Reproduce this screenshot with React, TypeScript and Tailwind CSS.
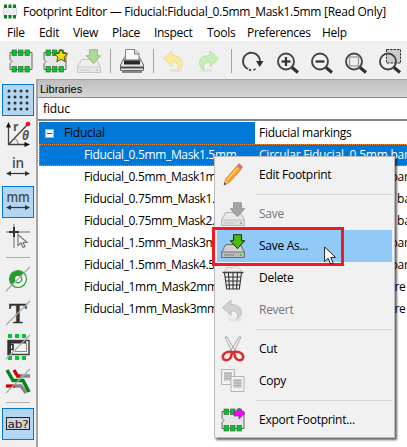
import React from "react";

type IconProps = { className?: string; children: React.ReactNode };
const Icon = ({ className = "", children }: IconProps) => (
  <svg width="24" height="24" viewBox="0 0 24 24" fill="none" className={`shrink-0 overflow-visible ${className}`}>
    {children}
  </svg>
);

const Chip = ({ children }: { children?: React.ReactNode }) => (
  <Icon>
    <path d="M1 3.500h22v17H1v-6l2-2-2-2z" fill="#e6e6e6" stroke="#666" />
    {[3, 9.500, 16].map((x) => (
      <g key={x} fill="#00c52b" stroke="#39713f" strokeWidth="0.700">
        <rect x={x} y="1" width="4.500" height="5.500" />
        <rect x={x} y="17.500" width="4.500" height="5.500" />
      </g>
    ))}
    {children}
  </Icon>
);
const Star = () => (
  <path d="M18 0l2 4.400 4.800.5-3.700 3.200 1.100 4.600L18 10.300l-4.200 2.400 1.100-4.600-3.700-3.200 4.800-.5z" fill="#f1dd16" stroke="#4d4300" strokeWidth="0.900" />
);
const Drive = ({ arrow, edge, body, led, tip = edge }: { arrow: string; edge: string; body: string; led: string; tip?: string }) => (
  <Icon>
    <path d="M4.500 10.500h15L23.500 18v5.500H.5V18z" fill={body} stroke={edge} strokeWidth="0.900" strokeLinejoin="round" />
    <path d="M5.500 11.500h13l3 6h-19z" fill="#fff" fillOpacity=".35" />
    <path d="M1 18h22M3 21h10" stroke={edge} strokeWidth="0.700" />
    <rect x="19" y="20" width="2" height="2" fill={led} />
    <path d="M12.500.7h8v6h3.200l-7.200 8-7.200-8h3.200z" fill={arrow} stroke={tip} strokeWidth="1" />
  </Icon>
);
const Printer = () => (
  <Icon>
    <path d="M3 11L5 7.500h14l2 3.500" fill="#bbb" stroke="#888" />
    <path d="M5.500.5h9.500l4 4V12H5.500z" fill="#f8f8f8" stroke="#888" />
    <path d="M14.500.5v4.500H19" fill="#ddd" stroke="#777" />
    <path d="M3 11h18l2.500 5v5.500H.5V16z" fill="#e6e6e6" stroke="#666" />
    <path d="M4 11.500h16v4H4z" fill="#282828" />
    <path d="M.5 17.500h23v2H.5z" fill="#4b4b4b" />
    <path d="M2 23h20" stroke="#666" strokeWidth="1.500" />
  </Icon>
);
const Undo = ({ fill, edge, flip = false }: { fill: string; edge: string; flip?: boolean }) => (
  <Icon className={flip ? "-scale-x-100" : ""}>
    <ellipse cx="14" cy="21.500" rx="7" ry="1.800" fill="#888" fillOpacity=".12" />
    <path d="M1.500 9.500L10 2v4.500c7 0 10.500 3 10.500 8 0 3-2 5.500-5 6 1.500-2 1.500-4.500 0-6-1.300-1.200-3-1.500-5.500-1.500v4.500z" fill={fill} stroke={edge} strokeWidth="1" strokeLinejoin="round" />
  </Icon>
);
const Rotate = () => (
  <Icon>
    <path d="M6 20A8.500 8.500 0 1 1 18 12.500M7 20.500l2 .8M11.500 21l2-1" stroke="#404040" strokeWidth="1.900" />
    <path d="M14 12h7.500l-3.800 6z" fill="#303030" />
  </Icon>
);
const Zoom = ({ kind }: { kind: "in" | "out" | "fit" | "area" }) => (
  <Icon>
    {kind === "area" && <rect x="8.500" y="0.500" width="14" height="13.500" fill="#ccc" stroke="#333" strokeDasharray="2.500 1" />}
    <circle cx="10" cy="12.500" r="8" stroke="#444" strokeWidth="1.900" />
    <path d="M16 18.500l6 5" stroke="#303030" strokeWidth="3.200" />
    {(kind === "in" || kind === "out") && <path d="M5.500 12.500h9" stroke="#303030" strokeWidth="2.200" />}
    {kind === "in" && <path d="M10 8v9" stroke="#303030" strokeWidth="2.200" />}
    {kind === "fit" && <rect x="5.500" y="8" width="9" height="9" stroke="#999" strokeWidth="1.300" />}
  </Icon>
);
const Grid = () => (
  <Icon>
    {[3, 9, 15, 21].map((y) => [3, 9, 15, 21].map((x) => <circle key={`${x}-${y}`} cx={x} cy={y} r="1.500" fill="#333" />))}
  </Icon>
);
const Polar = () => (
  <Icon>
    <path d="M2.500 3v19.500h18M2.500 22.500L21 3" stroke="#444" strokeWidth="1.300" />
    <path d="M0 5.500L2.500 0 5 5.500zM18.500 20l5.500 2.500-5.500 2.500z" fill="#111" />
    <path d="M8 17c3 0 4 2 4 5" stroke="#777" />
    <circle cx="22" cy="2" r="2.300" fill="#f20d18" />
    <text x="7" y="9" fontFamily="Open Sans, sans-serif" fontWeight="700" fontSize="12" fill="#555">r</text>
    <text x="16" y="18" fontFamily="Open Sans, sans-serif" fontWeight="700" fontStyle="italic" fontSize="12" fill="#555">θ</text>
  </Icon>
);
const Unit = ({ label }: { label: string }) => (
  <Icon>
    <text x="12" y="12" textAnchor="middle" textLength={label === "mm" ? 23 : 12} lengthAdjust="spacingAndGlyphs" fontFamily="Open Sans, sans-serif" fontWeight="600" fontSize="14" fill="#4b4b4b">{label}</text>
    <path d="M2 17.500h20" stroke="#333" strokeWidth="1.200" />
    <path d="M5 15l-5 2.500L5 20zM19 15l5 2.500-5 2.500z" fill="#333" />
  </Icon>
);
const Cross = () => (
  <Icon>
    <path d="M0 8h24M8 0v24" stroke="#999" strokeWidth="1.500" />
    <path d="M3 8h10M8 3v10" stroke="#333" strokeWidth="2" />
    <path d="M12 10.500v11l3-2.500 2 4.500 2-1-2-4h4z" fill="#f5f5f5" stroke="#777" strokeWidth="1.200" />
  </Icon>
);
const Slash = () => <path d="M0 24L24 0" stroke="#aaa" strokeWidth="1.300" />;
const Pad = () => (
  <Icon>
    <circle cx="12" cy="12" r="8.500" fill="#f4f8f4" stroke="#239b2d" strokeWidth="1.200" />
    <path d="M18 6A8.500 8.500 0 0 0 6 18z" fill="#239b2d" />
    <circle cx="12" cy="12" r="3.700" fill="#fff" stroke="#239b2d" strokeWidth="1.400" />
    <Slash />
  </Icon>
);
const TextIcon = () => (
  <Icon>
    <text x="3" y="21.500" fontFamily="Liberation Serif, serif" fontSize="29" fill="#333" stroke="#333" strokeWidth="0.700">T</text>
    <Slash />
  </Icon>
);
const Module = () => (
  <Icon>
    {[2, 9, 16].map((x) => (
      <g key={x} fill="#00c52b"><rect x={x} y="-1" width="4" height="4" /><rect x={x} y="21" width="4" height="4" /></g>
    ))}
    <path d="M2 5.500h21v14H2z" fill="#f5f5f5" stroke="#444" strokeWidth="1.500" />
    <path d="M2 5h3v15H2zM3 5.500h17v3H3z" fill="#333" />
    <path d="M3 9.500h4v5H3" stroke="#333" strokeWidth="1.700" />
    <path d="M20.500 8v8.500H9" stroke="#888" />
    <Slash />
  </Icon>
);
const Tracks = () => (
  <Icon>
    <path d="M8 1l3.500 6H16" stroke="#d2000f" strokeWidth="3.300" />
    <path d="M14 7h10M9 17h6l5 7" stroke="#888" strokeWidth="3.300" />
    <path d="M0 17h9" stroke="#d2000f" strokeWidth="3.300" />
    <path d="M1 1l6 10.500h10L23 23" stroke="#078416" strokeWidth="3.500" />
    <Slash />
  </Icon>
);
const NetName = () => (
  <Icon>
    <rect x="0.500" y="5.500" width="23" height="12" fill="#d3d3d3" stroke="#222" />
    <text x="1.500" y="15.500" textLength="21" lengthAdjust="spacingAndGlyphs" fontFamily="DejaVu Sans, sans-serif" fontSize="11" fill="#222">ab?</text>
  </Icon>
);
const Pencil = () => (
  <Icon>
    <path d="M3 22l1.500-6L16 3l4 3.500L8.500 19.500z" fill="#f6a32e" stroke="#b56a13" strokeWidth="0.600" />
    <path d="M6 17L17.500 4" stroke="#ffcd72" strokeWidth="1.300" />
    <path d="M16 3l2-2.500 3.700 3.200L20 6.500z" fill="#e56b70" stroke="#999" strokeWidth="0.700" />
    <path d="M3 22l1.200-5 3.500 3z" fill="#e5c28a" /><path d="M3 22l.6-2.500 1.800 1.500z" fill="#222" />
  </Icon>
);
const Trash = () => (
  <Icon>
    <path d="M4 5l2-4 5 1 4-2 4 3 1 3H3z" fill="#eee" stroke="#c5c5c5" />
    <path d="M1.500 6.500h21" stroke="#444" strokeWidth="1.500" />
    <path d="M3.500 7l2.200 16h12.600l2.200-16M7.500 7l1 16M12 7v16M16.500 7l-1 16M4 11h16M4.500 15h15M5 19h14" stroke="#333" strokeWidth="1.100" />
  </Icon>
);
const Cut = () => (
  <Icon>
    <path d="M4 0l2-.2L15 15l-3 2zM20 0l-2-.2L9 15l3 2z" fill="#eee" stroke="#999" strokeWidth="0.800" />
    <path d="M11 15C4 14 1 18 2 21c1 3 6 3 8-1zM13 15c7-1 10 3 9 6-1 3-6 3-8-1z" stroke="#d92e30" strokeWidth="2.500" />
  </Icon>
);
const Page = ({ x, y }: { x: number; y: number }) => (
  <g transform={`translate(${x} ${y})`}>
    <path d="M.5.5h13v15H.5z" fill="#f1f1f1" stroke="#b5b5b5" />
    <path d="M3 3h8v9H3z" fill="#ccc" /><path d="M3 4.500h8M3 7h8M3 9.500h8" stroke="#aaa" />
  </g>
);
const Copy = () => <Icon><Page x={0} y={0} /><Page x={9.500} y={7} /></Icon>;

const toolbar = [
  <Chip />,
  <Chip><Star /></Chip>,
  <Drive arrow="#b0d794" edge="#c4c4c4" body="#e7e7e7" led="#a8e39a" tip="#9cb98a" />,
  "w-[9px]",
  <Printer />,
  "w-2",
  <Undo fill="#f9e9a0" edge="#f0df9c" />,
  <Undo fill="#c8efb8" edge="#b5e3a5" flip />,
  "w-3",
  <Rotate />,
  <Zoom kind="in" />,
  <Zoom kind="out" />,
  <Zoom kind="fit" />,
  <Zoom kind="area" />,
];

const sideTools: { icon: React.ReactNode; active?: boolean; sep?: boolean }[] = [
  { icon: <Grid />, active: true },
  { icon: <Polar /> },
  { icon: <Unit label="in" /> },
  { icon: <Unit label="mm" />, active: true },
  { icon: <Cross />, sep: true },
  { icon: <Pad /> },
  { icon: <TextIcon /> },
  { icon: <Module /> },
  { icon: <Tracks />, sep: true },
  { icon: <NetName />, active: true },
];

const menus = [
  ["File", "w-8"], ["Edit", "w-[34px]"], ["View", "w-[39px]"], ["Place", "w-[42px]"],
  ["Inspect", "w-[53px]"], ["Tools", "w-10"], ["Preferences", "w-[75px]"], ["Help", "w-8"],
];

const rows = [
  ["Fiducial_0.5mm_Mask1.5mm", "0.5mm"],
  ["Fiducial_0.5mm_Mask1mm", "0.5mm"],
  ["Fiducial_0.75mm_Mask1.5mm", "0.75mm"],
  ["Fiducial_0.75mm_Mask2.25mm", "0.75mm"],
  ["Fiducial_1.5mm_Mask3mm", "1.5mm"],
  ["Fiducial_1.5mm_Mask4.5mm", "1.5mm"],
  ["Fiducial_1mm_Mask2mm", "1mm"],
  ["Fiducial_1mm_Mask3mm", "1mm"],
];

const MenuSep = () => <div className="ml-[39px] flex h-[7px] items-center"><div className="h-px w-full bg-[#d4d4d4]" /></div>;
const MenuItem = ({ icon, label, disabled = false, active = false }: { icon: React.ReactNode; label: string; disabled?: boolean; active?: boolean }) => (
  <div className={`flex h-8 items-center pl-1 tracking-[-0.28px] ${active ? "bg-[#91c9f7]" : ""} ${disabled ? "text-[#777]" : ""}`}>
    {icon}
    <span className="ml-[14px]">{label}</span>
  </div>
);

export default function App() {
  return (
    <div className="relative flex h-[447px] w-[407px] flex-col overflow-hidden bg-white font-['Open_Sans','Noto_Sans',sans-serif] text-[12px] leading-4 tracking-[-0.2px] whitespace-nowrap text-black">
      <header className="flex h-[23px] shrink-0 items-center pl-[3px]">
        <svg width="14" height="15" viewBox="0 0 14 15">
          <path d="M.5 3h13v9H.5z" fill="#eee" stroke="#bbb" strokeDasharray="1 1" />
          {[1, 5.500, 10].map((x) => <g key={x} fill="#087f21"><rect x={x} y="0.500" width="3" height="3.500" /><rect x={x} y="11" width="3" height="3.500" /></g>)}
        </svg>
        <span className="ml-1.5 tracking-[-0.28px]">Footprint Editor — Fiducial:Fiducial_0.5mm_Mask1.5mm [Read Only]</span>
      </header>
      <nav className="flex h-[18px] shrink-0 items-center pt-px pl-[7px] tracking-[-0.3px]">
        {menus.map(([name, width]) => <span key={name} className={width}>{name}</span>)}
      </nav>
      <div className="flex h-[38px] shrink-0 items-center bg-[#f0f0f0] pt-0.5 pl-1">
        {toolbar.map((item, i) => typeof item === "string"
          ? <div key={i} className={`flex shrink-0 justify-center ${item}`}><div className="h-6 w-px bg-[#a5a5a5]" /></div>
          : <div key={i} className="flex w-[34px] shrink-0 justify-center">{item}</div>)}
      </div>
      <div className="flex min-h-0 flex-1">
        <aside className="flex w-9 shrink-0 flex-col items-center gap-0.5 bg-[#f0f0f0] pt-[5px]">
          {sideTools.map(({ icon, active, sep }, i) => (
            <React.Fragment key={i}>
              <div className={`flex size-8 shrink-0 items-center justify-center ${active ? "border border-[#0078d7] bg-[#b3d7f3]" : ""}`}>{icon}</div>
              {sep && <div className="flex h-[7px] w-6 shrink-0 items-center"><div className="h-px w-full bg-[#adadad]" /></div>}
            </React.Fragment>
          ))}
        </aside>
        <main className="flex min-w-0 flex-1 flex-col border-t border-l-2 border-[#a5a5a5]">
          <div className="flex h-[17px] shrink-0 items-center bg-linear-to-b from-[#bebebe] to-[#d6d6d6] pl-0.5 font-['Liberation_Sans',sans-serif] text-[11px] tracking-normal">Libraries</div>
          <div className="flex h-[24px] shrink-0 items-center border-t border-b-2 border-[#858585] pl-[5px] tracking-[-0.1px]">fiduc</div>
          <div className="flex flex-col pt-px pl-px">
            <div className="flex h-[22px] items-center">
              <div className="flex h-full w-[216px] shrink-0 items-center bg-[#0078d7] pl-1.5">
                <div className="flex size-[9px] items-center justify-center border border-[#a9b4c0] bg-[#f4f4f4]"><div className="h-px w-[5px] bg-[#334a9b]" /></div>
                <span className="ml-2.5">Fiducial</span>
              </div>
              <span className="ml-1 tracking-[-0.27px]">Fiducial markings</span>
            </div>
            {rows.map(([name, size], i) => (
              <div key={name} className={`flex h-[22px] items-center border border-r-0 ${i === 0 ? "border-dotted border-[#f08a32] bg-[#0078d7] text-white" : "border-transparent"}`}>
                <span className="w-[219px] shrink-0 pl-11 tracking-[-0.34px]">{name}</span>
                <span className="tracking-[-0.23px]">Circular Fiducial, {size} bare copper</span>
              </div>
            ))}
          </div>
        </main>
      </div>
      <div className="absolute top-[156px] left-[214px] h-[282px] w-[181px] border border-[#bcbcbc] bg-[#f1f1f1] p-0.5 shadow-[2px_2px_2px_#00000099]">
        <MenuItem icon={<Pencil />} label="Edit Footprint" />
        <MenuSep />
        <MenuItem icon={<Drive arrow="#a4a4a4" edge="#b5b5b5" body="#ddd" led="#aaa" tip="#999" />} label="Save" disabled />
        <MenuItem icon={<Drive arrow="#4dbb08" edge="#666" body="#bbb" led="#32df22" tip="#222" />} label="Save As..." active />
        <MenuItem icon={<Trash />} label="Delete" />
        <MenuItem icon={<Undo fill="#d0d0d0" edge="#c2c2c2" />} label="Revert" disabled />
        <MenuSep />
        <MenuItem icon={<Cut />} label="Cut" />
        <MenuItem icon={<Copy />} label="Copy" />
        <MenuSep />
        <MenuItem icon={<Chip><path d="M13 3h5V0l6 5.500-6 5.500V8h-5z" fill="#f0f" stroke="#704070" strokeWidth="0.700" /></Chip>} label="Export Footprint..." />
      </div>
      <div className="absolute top-[227px] left-[212px] h-[39px] w-[132px] border-3 border-[#ed1c24]" />
      <svg className="absolute top-[246px] left-[324px]" width="13" height="19" viewBox="0 0 13 19">
        <path d="M.6 1v14.500l3.500-3.200 2.600 5.800 2.500-1.100-2.500-5.600h4.800z" fill="#fff" stroke="#222" />
      </svg>
    </div>
  );
}
